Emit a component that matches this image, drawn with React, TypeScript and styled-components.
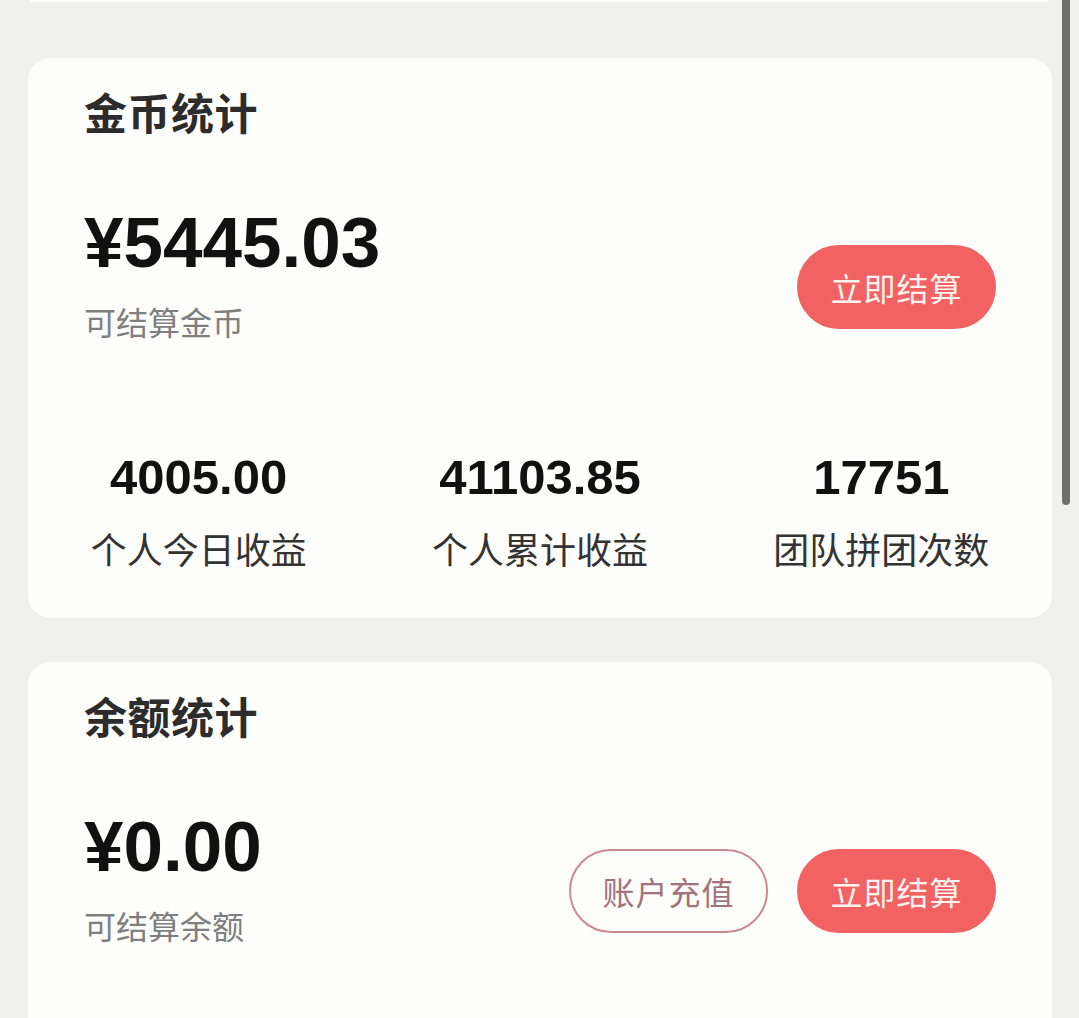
import React from 'react'
import styled, { createGlobalStyle } from 'styled-components'

const GlobalStyle = createGlobalStyle`
  html, body {
    margin: 0;
    padding: 0;
    background: #f0f0ef;
    overflow: hidden;
  }
  * { box-sizing: border-box; }
`

const Page = styled.div`
  position: relative;
  height: 1018px;
  overflow: hidden;
  background: #f0f0ef;
  font-family: "Noto Sans CJK SC", "Noto Sans", sans-serif;
`

const PrevCard = styled.div`
  margin: 0 30px 0 30px;
  height: 2px;
  background: #fdfdfc;
  border-radius: 0 0 20px 20px;
`

const Card = styled.div<{ top: number }>`
  margin: ${({ top }) => top}px 27px 0 28px;
  background: #fdfdfc;
  border-radius: 22px;
  padding: 32px 0 52px;
  box-shadow: 0 1px 3px rgba(0, 0, 0, 0.03);
`

const Title = styled.div`
  padding: 0 56px;
  font-size: 43px;
  line-height: 42px;
  font-weight: 700;
  color: #2c2c2c;
  letter-spacing: 0.5px;
`

const BalanceRow = styled.div`
  display: flex;
  justify-content: space-between;
  align-items: flex-start;
  padding: 0 56px;
  margin-top: 75px;
`

const Amount = styled.div`
  font-family: "Liberation Sans", Arial, sans-serif;
  font-size: 71px;
  line-height: 71px;
  font-weight: 700;
  color: #111;
`

const SubLabel = styled.div`
  margin-top: 27px;
  font-size: 32px;
  line-height: 32px;
  color: #7f7f7f;
`

const Buttons = styled.div`
  display: flex;
  gap: 29px;
  margin-top: 38px;
`

const Pill = styled.button<{ outline?: boolean }>`
  width: 199px;
  height: 84px;
  border-radius: 42px;
  font-family: "Noto Sans CJK SC", sans-serif;
  font-size: 32px;
  letter-spacing: 1px;
  cursor: pointer;
  background: ${({ outline }) => (outline ? '#fdfdfc' : '#f26262')};
  color: ${({ outline }) => (outline ? '#a3727a' : '#fff3ef')};
  border: 2px solid ${({ outline }) => (outline ? '#c98a90' : '#f26262')};
`

const Stats = styled.div`
  display: grid;
  grid-template-columns: repeat(3, 1fr);
  margin-top: 116px;
`

const Stat = styled.div`
  display: flex;
  flex-direction: column;
  align-items: center;
`

const StatValue = styled.div`
  font-family: "Liberation Sans", Arial, sans-serif;
  font-size: 49px;
  line-height: 49px;
  font-weight: 700;
  color: #111;
`

const StatLabel = styled.div`
  margin-top: 28px;
  font-size: 36px;
  line-height: 36px;
  color: #333;
`

const ScrollThumb = styled.div`
  position: absolute;
  top: 0;
  right: 9px;
  width: 8px;
  height: 505px;
  border-radius: 0 0 4px 4px;
  background: #6f6f6f;
`

const stats = [
  { value: '4005.00', label: '个人今日收益' },
  { value: '41103.85', label: '个人累计收益' },
  { value: '17751', label: '团队拼团次数' },
]

export default function App() {
  return (
    <Page>
      <GlobalStyle />
      <PrevCard />

      <Card top={56}>
        <Title>金币统计</Title>
        <BalanceRow>
          <div>
            <Amount>¥5445.03</Amount>
            <SubLabel>可结算金币</SubLabel>
          </div>
          <Buttons>
            <Pill>立即结算</Pill>
          </Buttons>
        </BalanceRow>
        <Stats>
          {stats.map((s) => (
            <Stat key={s.label}>
              <StatValue>{s.value}</StatValue>
              <StatLabel>{s.label}</StatLabel>
            </Stat>
          ))}
        </Stats>
      </Card>

      <Card top={44}>
        <Title>余额统计</Title>
        <BalanceRow>
          <div>
            <Amount>¥0.00</Amount>
            <SubLabel>可结算余额</SubLabel>
          </div>
          <Buttons>
            <Pill outline>账户充值</Pill>
            <Pill>立即结算</Pill>
          </Buttons>
        </BalanceRow>
        <Stats>
          <Stat>
            <StatValue>&nbsp;</StatValue>
          </Stat>
        </Stats>
      </Card>

      <ScrollThumb />
    </Page>
  )
}
